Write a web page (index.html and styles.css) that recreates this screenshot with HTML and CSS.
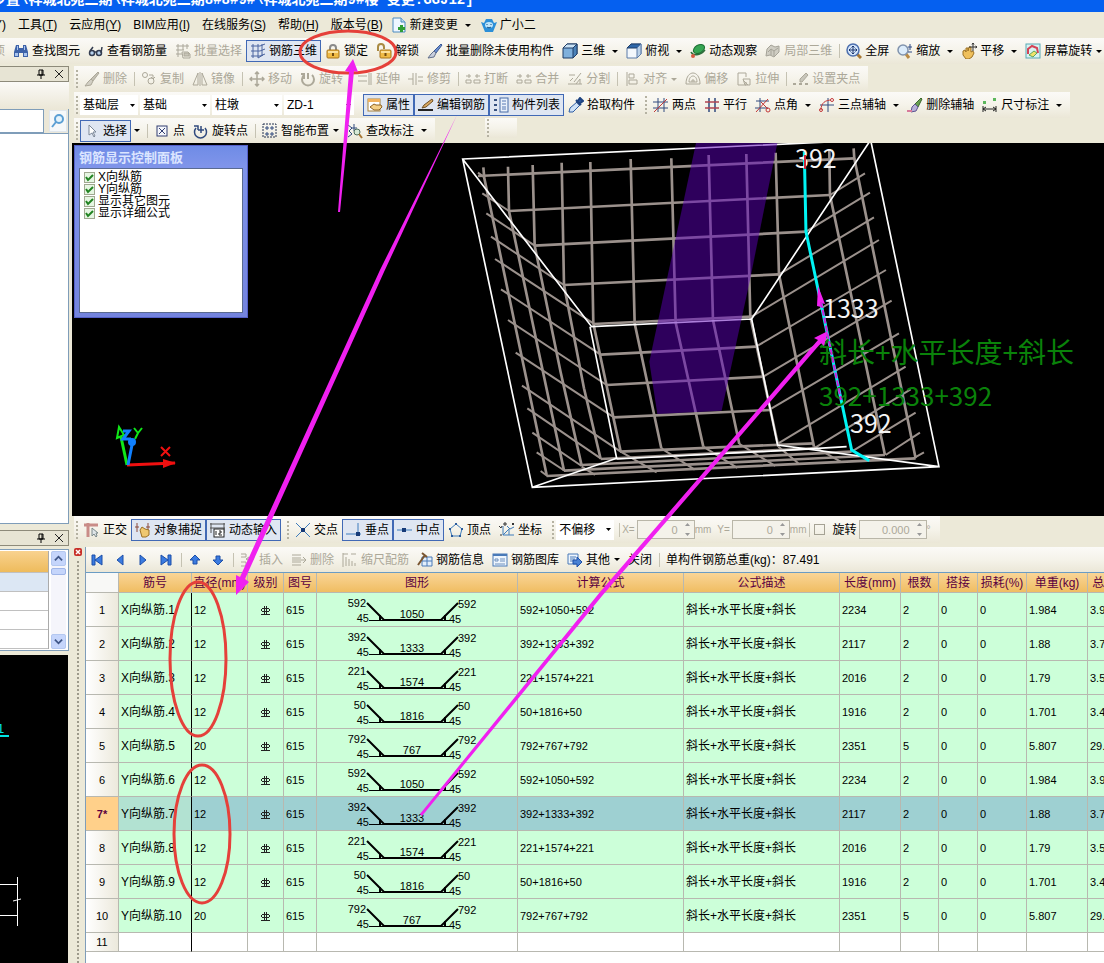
FILE: index.html
```html
<!DOCTYPE html>
<html lang="zh-CN">
<head>
    <meta charset="UTF-8">
    <meta name="viewport" content="width=device-width, initial-scale=1.0">
    <title>钢筋三维</title>
    <link rel="stylesheet" href="styles.css">
</head>
<body>
    <!-- icon sprite -->
    <svg class="sprite" aria-hidden="true">
        <symbol id="i-find" viewBox="0 0 16 16"><path d="M3 2h3v3h4V2h3l2 7v5h-5v-4H6v4H1V9z" fill="#3d62a8"/><path d="M2 10h3v3H2zM11 10h3v3h-3zM4 3h1v4H4zM11 3h1v4h-1z" fill="#a9c4ee"/></symbol>
        <symbol id="i-glasses" viewBox="0 0 16 16"><circle cx="4" cy="10" r="2.5" fill="#b9d3ee" stroke="#333c50" stroke-width="1.5"/><circle cx="11" cy="10" r="2.5" fill="#b9d3ee" stroke="#333c50" stroke-width="1.5"/><path d="M6 9h3M2 8l3-4M13 10l1-6" stroke="#333c50" stroke-width="1.5" fill="none"/></symbol>
        <symbol id="i-batch" viewBox="0 0 16 16"><path d="M1 3h13M1 7h8M1 11h6M3 1v13M8 1v6M12 1v5M7 9h6l2 2v4H8z" fill="none" stroke="#aaa79a"/><path d="M9 10h5v3H9z" fill="#c8c5b8"/></symbol>
        <symbol id="i-mesh" viewBox="0 0 16 16"><path d="M1 3h9l5-2M1 8h9l5-2M1 13h9l5-2M3 1v14M8 1v14M12 1v12M8 15l5-3" fill="none" stroke="#4a64a0"/></symbol>
        <symbol id="i-lock" viewBox="0 0 16 16"><path d="M5 8V5a3 3 0 0 1 6 0v3" fill="none" stroke="#8a8a8a" stroke-width="2"/><rect x="2" y="7" width="12" height="8" rx="1" fill="#f0bb45" stroke="#a8741c"/><path d="M3 8h10v2H3z" fill="#fbe09a"/><path d="M8 10v3" stroke="#704a10" stroke-width="2"/></symbol>
        <symbol id="i-unlock" viewBox="0 0 16 16"><path d="M2 8V4a3 3 0 0 1 6 0v2" fill="none" stroke="#a98a42" stroke-width="2"/><rect x="4" y="7" width="11" height="8" rx="1" fill="#f0bb45" stroke="#a8741c"/><path d="M5 8h9v2H5z" fill="#fbe09a"/><path d="M9.500 10v3" stroke="#704a10" stroke-width="2"/></symbol>
        <symbol id="i-brush" viewBox="0 0 16 16"><path d="M14 1L7 8l2 2 6-8z" fill="#6c8fd0" stroke="#3b5a96"/><path d="M7 8l2 2-2 4-6 1 3-4z" fill="#c9cfdd" stroke="#62708c"/></symbol>
        <symbol id="i-erase" viewBox="0 0 16 16"><path d="M14 1L7 8l2 2 6-8z" fill="#c3c0b4" stroke="#aca899"/><path d="M7 8l2 2-2 4-6 1 3-4z" fill="#d2cfc4" stroke="#aca899"/></symbol>
        <symbol id="i-axisbrush" viewBox="0 0 16 16"><path d="M14 1L8 7l3 3 4-8z" fill="#69a052" stroke="#3c672d"/><path d="M8 7l3 3-2 4-5 1 1-5z" fill="#b7b0d8" stroke="#5d5490"/><path d="M0 14h5" stroke="#d87a9a" stroke-width="2"/></symbol>
        <symbol id="i-cube" viewBox="0 0 16 16"><path d="M1 5l4-4h10v10l-4 4H1z" fill="#7fb0dc" stroke="#1e3c66"/><path d="M1 5l4-4h10l-4 4z" fill="#c9e2f5" stroke="#1e3c66"/><path d="M11 5l4-4v10l-4 4z" fill="#4b82b8" stroke="#1e3c66"/></symbol>
        <symbol id="i-topcube" viewBox="0 0 16 16"><path d="M1 5l4-4h10v10l-4 4H1z" fill="#f2f7fc" stroke="#5a7ba8"/><path d="M1 5l4-4h10l-4 4z" fill="#2d66a8" stroke="#1e3c66"/><path d="M11 5l4-4v10l-4 4z" fill="#b9d0e8" stroke="#5a7ba8"/></symbol>
        <symbol id="i-orbit" viewBox="0 0 16 16"><ellipse cx="9" cy="6" rx="6" ry="4" transform="rotate(-30 9 6)" fill="#36a552" stroke="#1d6f34"/><path d="M1 9c2 4 9 4 14-2" fill="none" stroke="#2c6d3a" stroke-width="1.500"/><circle cx="3" cy="13" r="2" fill="#d65a43"/></symbol>
        <symbol id="i-part" viewBox="0 0 16 16"><path d="M2 6l4-4 4 2 4-1v6l-5 5-4-2-4 1z" fill="#cfcdc3" stroke="#a5a398"/><path d="M3 9l3-3 3 2 4-3M6 6v6M9 8v5" fill="none" stroke="#a5a398"/></symbol>
        <symbol id="i-full" viewBox="0 0 16 16"><path d="M11 11l4 4" stroke="#a87834" stroke-width="3"/><circle cx="7" cy="7" r="6" fill="#d5e6fa" stroke="#4d6fae" stroke-width="1.500"/><path d="M7 3v8M3 7h8M5.500 4.500L7 3l1.500 1.500M5.500 9.500L7 11l1.500-1.500M4.500 5.500L3 7l1.500 1.500M9.500 5.500L11 7 9.500 8.500" stroke="#1b356e" fill="none"/></symbol>
        <symbol id="i-zoom" viewBox="0 0 16 16"><path d="M9 11l3 4" stroke="#b98a45" stroke-width="3"/><circle cx="6" cy="7" r="5" fill="#dcecfb" stroke="#8193ad" stroke-width="1.500"/><path d="M13 1v6M11 4h4M11 9h4" stroke="#2e4b86"/></symbol>
        <symbol id="i-pan" viewBox="0 0 16 16"><path d="M2 8l2-1 1 2V5h2v3l1-4h2v5l2-1 1 2-2 4-3 2H5l-3-4z" fill="#efc05c" stroke="#9b7024"/><path d="M12 0v8M8 4h8M11 1.500L12 0l1 1.500M14.500 3L16 4l-1.500 1" stroke="#333" fill="none"/></symbol>
        <symbol id="i-rotscreen" viewBox="0 0 16 16"><rect x="1" y="1" width="14" height="14" fill="#d9f3f3" stroke="#59aab5"/><path d="M3 11V6l4-3 5 2 1 5" fill="none" stroke="#d44356" stroke-width="2"/><path d="M4 12l5-4 3 2-4 4z" fill="#f1e26b" stroke="#5fa55c"/></symbol>
        <symbol id="i-newdoc" viewBox="0 0 16 16"><path d="M2 1h8l4 4v10H2z" fill="#eef6ff" stroke="#4a8ac0"/><path d="M10 1v4h4" fill="#b8d8f0" stroke="#4a8ac0"/><path d="M10.500 8v7M7 11.500h7" stroke="#2f9e36" stroke-width="3"/></symbol>
        <symbol id="i-xiaoer" viewBox="0 0 16 16"><path d="M0 5l3 1 2-4h6l2 4 3-1-2 5-2 5H4L2 10z" fill="#2b8fd8"/><ellipse cx="8" cy="8" rx="4" ry="3" fill="#bfe6fb"/><path d="M6 7v1M10 7v1M6 10c1 1 3 1 4 0" stroke="#124c80" fill="none"/></symbol>
        <symbol id="i-copy" viewBox="0 0 16 16"><circle cx="4" cy="4" r="2.500"/><circle cx="10" cy="10" r="3"/><path d="M8 4h4v3M10 6l2 2 2-2"/></symbol>
        <symbol id="i-mirror" viewBox="0 0 16 16"><path d="M6 2v12H1zM10 2v12h5zM8 1v14"/></symbol>
        <symbol id="i-move" viewBox="0 0 16 16"><path d="M8 1v14M1 8h14M6 3l2-2 2 2M6 13l2 2 2-2M3 6L1 8l2 2M13 6l2 2-2 2" stroke-width="1.500"/></symbol>
        <symbol id="i-rotate" viewBox="0 0 16 16"><path d="M4 4a6 6 0 1 0 8 0M8 2v6M4 8V3H1" stroke-width="2"/></symbol>
        <symbol id="i-extend" viewBox="0 0 16 16"><path d="M1 5h9M1 10h9M12 2v12M14 2v12"/></symbol>
        <symbol id="i-trim" viewBox="0 0 16 16"><path d="M0 8h5M5 2v12M8 2v12M10 6h5M10 10h5"/></symbol>
        <symbol id="i-break" viewBox="0 0 16 16"><path d="M1 5h5M10 5h5M4 3v4M12 3v4M1 12h5v-3H1zM9 12h6v-3H9z"/></symbol>
        <symbol id="i-split" viewBox="0 0 16 16"><path d="M1 13h14M2 4h6M3 10l3-3M7 11l7-9M9 13l4-5v5"/></symbol>
        <symbol id="i-align" viewBox="0 0 16 16"><path d="M3 1v14M5 3h5v4H5zM5 9h8v4H5z"/></symbol>
        <symbol id="i-offset" viewBox="0 0 16 16"><path d="M1 13c0-8 4-11 7-11s7 3 7 11zM4 11c0-4 2-6 4-6s4 2 4 6zM7 11V9h2v2"/></symbol>
        <symbol id="i-stretch" viewBox="0 0 16 16"><path d="M2 2h8v4M2 2v12h8v-3M7 8h7v6h-5zM8 10l4 4"/></symbol>
        <symbol id="i-grippt" viewBox="0 0 16 16"><path d="M0 13h3M6 13h3M12 13h3" stroke-width="2"/><path d="M13 2L7 8v3h2l6-7z" fill="#c8c6bb"/></symbol>
        <symbol id="i-prop" viewBox="0 0 16 16"><rect x="1" y="2" width="12" height="12" fill="#fff" stroke="#a8813a"/><path d="M1 2h12v3H1z" fill="#f2b25c"/><path d="M3 10l4-3 2 1h5l1 2-3 3H7z" fill="#f4cf86" stroke="#8d6224"/></symbol>
        <symbol id="i-edit" viewBox="0 0 16 16"><path d="M0 13h15" stroke="#222" stroke-width="2"/><path d="M14 2l-8 6-2 3 4-1 7-6z" fill="#d9a860" stroke="#6e4f25"/></symbol>
        <symbol id="i-list" viewBox="0 0 16 16"><path d="M1 3h3M1 8h3M1 13h3" stroke="#36507f" stroke-width="2"/><rect x="7" y="1" width="8" height="14" fill="#e9f1fb" stroke="#476aa6"/><path d="M9 4h4M9 7h4M9 10h4M9 12h4" stroke="#5679b4"/></symbol>
        <symbol id="i-pick" viewBox="0 0 16 16"><path d="M9 5l3 3-7 7-4 0 1-4z" fill="#cfe2f7" stroke="#2f5da3"/><path d="M8 3l5 5M9 5l3-4 3 3-4 3z" fill="#2c5aa3" stroke="#1f4481" stroke-width="2"/></symbol>
        <symbol id="i-twopt" viewBox="0 0 16 16"><path d="M5 1v14M11 1v14M0 5h15M0 11h15" stroke="#304a7e"/><path d="M1 15L14 2" stroke="#c23838"/></symbol>
        <symbol id="i-parallel" viewBox="0 0 16 16"><path d="M5 1v14M11 1v14" stroke="#304a7e" stroke-width="1.500"/><path d="M1 5h14M1 11h14" stroke="#b14451" stroke-width="1.500"/></symbol>
        <symbol id="i-angle" viewBox="0 0 16 16"><path d="M5 1v14M1 4h13M0 11h13" stroke="#304a7e"/><path d="M1 15L13 2M6 5l7 7" stroke="#c23838"/><circle cx="13" cy="13" r="2" fill="none" stroke="#c23838"/></symbol>
        <symbol id="i-threept" viewBox="0 0 16 16"><path d="M9 1v14M1 8h14" stroke="#304a7e"/><path d="M2 13c0-7 4-10 11-10" fill="none" stroke="#c23838"/><circle cx="2" cy="13" r="1.500" fill="none" stroke="#c23838"/><circle cx="13" cy="3" r="1.500" fill="#fff" stroke="#c23838"/></symbol>
        <symbol id="i-dim" viewBox="0 0 16 16"><path d="M1 9v6M14 9v6M1 12h13M4 10l-3 2 3 2M11 10l3 2-3 2" stroke="#222" fill="none"/><path d="M1 4h3v3H1zM11 1h3v3h-3z" fill="#5cb75c"/></symbol>
        <symbol id="i-cursor" viewBox="0 0 16 16"><path d="M5 2v10l3-2 2 4 1-1-2-4h3z" fill="#fff" stroke="#7b8798"/></symbol>
        <symbol id="i-point" viewBox="0 0 16 16"><rect x="3" y="3" width="10" height="10" fill="#f4f6fb" stroke="#323f72"/><path d="M5 5l6 6M11 5l-6 6" stroke="#323f72"/></symbol>
        <symbol id="i-rotpt" viewBox="0 0 16 16"><path d="M3 5a6 6 0 1 0 9 0M1 3h4v4M8 3v7M5 7h6" fill="none" stroke="#304a7e" stroke-width="1.500"/></symbol>
        <symbol id="i-smart" viewBox="0 0 16 16"><rect x="1" y="1" width="13" height="13" fill="none" stroke="#23304f" stroke-dasharray="2 1"/><path d="M5 3v4M3 5h4M10 3v4M8 5h4M5 9v4M3 11h4M10 9v4M8 11h4" stroke="#304a7e"/></symbol>
        <symbol id="i-check" viewBox="0 0 16 16"><path d="M1 2l4 3-3 3 3 3-4 3M7 1v7M4 5h6" stroke="#304a7e" fill="none"/><circle cx="10" cy="9" r="3" fill="#d7e9d6" stroke="#4d6d5b"/><path d="M12 11l3 4" stroke="#a87834" stroke-width="2"/></symbol>
        <symbol id="i-ortho" viewBox="0 0 16 16"><path d="M0 3h14M4 1v14" stroke="#c98c88" stroke-width="3"/><path d="M8 6v8l2-2 2 3 1-1-1-3h2z" fill="#dfe5e8" stroke="#7c8a8c"/></symbol>
        <symbol id="i-snap" viewBox="0 0 16 16"><path d="M2 1v9M13 1v9M0 5h4M11 5h4" stroke="#8a4b3c"/><path d="M5 8l2-3 3 2 4 1v5l-3 2H7z" fill="#efc870" stroke="#9b7024"/></symbol>
        <symbol id="i-dyn" viewBox="0 0 16 16"><path d="M0 2h15M0 6h15M1 1v10M14 1v10" stroke="#555" fill="none"/><rect x="4" y="7" width="10" height="8" fill="#fff" stroke="#222"/><path d="M6 9v4M9 9h2v2H9v2h3" stroke="#222" fill="none"/></symbol>
        <symbol id="i-cross" viewBox="0 0 16 16"><path d="M1 1l14 14M15 1L1 15" stroke="#3e7cbc"/><rect x="6" y="6" width="4" height="4" fill="#173b78"/></symbol>
        <symbol id="i-perp" viewBox="0 0 16 16"><path d="M12 1v12M0 12h15" stroke="#3e7cbc"/><rect x="10" y="10" width="4" height="4" fill="#173b78"/></symbol>
        <symbol id="i-mid" viewBox="0 0 16 16"><path d="M0 8h15" stroke="#3e7cbc"/><rect x="5" y="6" width="4" height="4" fill="#173b78"/></symbol>
        <symbol id="i-vertex" viewBox="0 0 16 16"><path d="M8 2l6 5-2 7H4L2 7z" fill="none" stroke="#3e7cbc"/><path d="M7 1h2v2H7zM13 6h2v2h-2zM1 6h2v2H1zM3 13h2v2H3zM11 13h2v2h-2z" fill="#2a5a9b"/></symbol>
        <symbol id="i-coord" viewBox="0 0 16 16"><path d="M4 4v9h11M4 13l6-6M10 7v6M8 4l3 3 4-2" stroke="#3e7cbc" fill="none"/><path d="M0 4l2 2 1-2M1 13h2M5 1h2v2H5zM13 1l2 2M15 1l-2 2" stroke="#333" fill="none"/></symbol>
        <symbol id="i-first" viewBox="0 0 16 16"><path d="M3 3h3v10H3zM13 3v10L6 8z" fill="#3b7be0" stroke="#1d4fa8"/></symbol>
        <symbol id="i-prev" viewBox="0 0 16 16"><path d="M11 3v10L5 8z" fill="#3b7be0" stroke="#1d4fa8"/></symbol>
        <symbol id="i-next" viewBox="0 0 16 16"><path d="M5 3v10l6-5z" fill="#3b7be0" stroke="#1d4fa8"/></symbol>
        <symbol id="i-last" viewBox="0 0 16 16"><path d="M10 3h3v10h-3zM3 3v10l7-5z" fill="#3b7be0" stroke="#1d4fa8"/></symbol>
        <symbol id="i-up" viewBox="0 0 16 16"><path d="M8 3l5 5h-3v4H6V8H3z" fill="#3b7be0" stroke="#1d4fa8"/></symbol>
        <symbol id="i-down" viewBox="0 0 16 16"><path d="M8 13l5-5h-3V4H6v4H3z" fill="#3b7be0" stroke="#1d4fa8"/></symbol>
        <symbol id="i-insert" viewBox="0 0 16 16"><path d="M1 2h5v3H1M1 10h5v4H1M6 7h8M9 5L6 7l3 2"/></symbol>
        <symbol id="i-delrow" viewBox="0 0 16 16"><path d="M1 3h9M1 6h9M1 8h14M1 10h9M1 13h9M12 5l3 3-3 3"/></symbol>
        <symbol id="i-scale" viewBox="0 0 16 16"><path d="M1 1v14M1 2h5M4 5v9M7 7v7M10 9v5M13 11v3M9 2h5"/></symbol>
        <symbol id="i-info" viewBox="0 0 16 16"><path d="M5 5h10v9H5zM5 9h10M10 5v9" fill="#e3effb" stroke="#4a7ab8"/><path d="M1 13L8 3M5 1l5 4" stroke="#7a5631" stroke-width="2"/></symbol>
        <symbol id="i-lib" viewBox="0 0 16 16"><rect x="1" y="2" width="14" height="12" fill="#eef5fd" stroke="#4a7ab8"/><path d="M1 3h14" stroke="#4a7ab8" stroke-width="2"/><path d="M3 7h3v2H3zM8 7h5M8 9h5M3 12h10" stroke="#6f90bd" fill="none"/></symbol>
        <symbol id="i-other" viewBox="0 0 16 16"><path d="M1 2h10v10H1z" fill="#eef5fd" stroke="#4a7ab8"/><path d="M3 5h6M3 7h5M3 9h4" stroke="#4a7ab8"/><path d="M6 8h4V5l5 5-5 5v-3H6z" fill="#4a82d4" stroke="#1d4fa8"/></symbol>
        <symbol id="i-pin" viewBox="0 0 10 10"><path d="M3 1h4v5H3zM6 1v5M1 6h8M5 6v4" fill="none" stroke="#000"/></symbol>
        <symbol id="i-close" viewBox="0 0 10 10"><path d="M1 1l8 8M9 1L1 9" stroke="#222"/></symbol>
        <symbol id="grade" viewBox="0 0 11 11"><path d="M4.500 1v8M6.500 1v8M1 9.500h9M2 3.500h7M2 6.500h7M1.500 4v2M9.500 4v2" stroke="#222" fill="none"/></symbol>
        <symbol id="bent" viewBox="0 0 140 32"><path d="M20 9l17 17h57l17-17" fill="none" stroke="#000" stroke-width="2"/><path d="M22 26.500h15M94 26.500h13" fill="none" stroke="#000"/><path d="M33 21v5M98 21v5" fill="none" stroke="#000" stroke-width="2"/></symbol>
    </svg>

    <header class="titlebar">步置\祥城北苑二期\祥城北苑二期8#8#9#\祥城北苑二期9#楼 变更.GGJ12]</header>

    <nav class="menubar">
        <a href="#">(Y)</a>
        <a href="#">工具(<u>T</u>)</a>
        <a href="#">云应用(<u>Y</u>)</a>
        <a href="#">BIM应用(<u>I</u>)</a>
        <a href="#">在线服务(<u>S</u>)</a>
        <a href="#">帮助(<u>H</u>)</a>
        <a href="#">版本号(<u>B</u>)</a>
        <button class="tool"><svg class="icon"><use href="#i-newdoc"/></svg>新建变更<i class="drop"></i></button>
        <button class="tool"><svg class="icon"><use href="#i-xiaoer"/></svg>广小二</button>
    </nav>

    <div class="main-tools strip">
        <button class="tool" disabled>项</button>
        <button class="tool"><svg class="icon"><use href="#i-find"/></svg>查找图元</button>
        <button class="tool"><svg class="icon"><use href="#i-glasses"/></svg>查看钢筋量</button>
        <button class="tool" disabled><svg class="icon"><use href="#i-batch"/></svg>批量选择</button>
        <button class="tool on"><svg class="icon"><use href="#i-mesh"/></svg>钢筋三维</button>
        <button class="tool"><svg class="icon"><use href="#i-lock"/></svg>锁定</button>
        <button class="tool"><svg class="icon"><use href="#i-unlock"/></svg>解锁</button>
        <button class="tool"><svg class="icon"><use href="#i-brush"/></svg>批量删除未使用构件</button>
        <span class="gap"></span>
        <button class="tool"><svg class="icon"><use href="#i-cube"/></svg>三维<i class="drop"></i></button>
        <button class="tool"><svg class="icon"><use href="#i-topcube"/></svg>俯视<i class="drop"></i></button>
        <button class="tool"><svg class="icon"><use href="#i-orbit"/></svg>动态观察</button>
        <button class="tool" disabled><svg class="icon"><use href="#i-part"/></svg>局部三维</button>
        <span class="sep"></span>
        <button class="tool"><svg class="icon"><use href="#i-full"/></svg>全屏</button>
        <button class="tool"><svg class="icon"><use href="#i-zoom"/></svg>缩放<i class="drop"></i></button>
        <button class="tool"><svg class="icon"><use href="#i-pan"/></svg>平移<i class="drop"></i></button>
        <button class="tool"><svg class="icon"><use href="#i-rotscreen"/></svg>屏幕旋转<i class="drop near"></i></button>
    </div>

    <div class="workspace">
        <aside class="sidebar">
            <div class="dock-head"><svg class="mini"><use href="#i-pin"/></svg><svg class="mini"><use href="#i-close"/></svg></div>
            <div class="dock-strip"></div>
            <div class="search">
                <input type="text" aria-label="搜索">
                <button aria-label="查找"><svg class="icon" viewBox="0 0 16 16"><circle cx="9" cy="6" r="4" fill="#e4f3fc" stroke="#5b9fd4" stroke-width="2"/><path d="M6 9l-4 5" stroke="#5b9fd4" stroke-width="2"/></svg></button>
            </div>
            <div class="tree"></div>
            <div class="dock-head second"><svg class="mini"><use href="#i-pin"/></svg><svg class="mini"><use href="#i-close"/></svg></div>
            <div class="props">
                <div class="prop-rows"><div class="head"></div><div class="sel"></div><div></div><div></div><div></div></div>
                <div class="scroll">
                    <button aria-label="向上"><svg viewBox="0 0 10 10"><path d="M1 7l4-4 4 4" fill="none" stroke="#3f5687" stroke-width="2"/></svg></button>
                    <span class="thumb"></span>
                    <button class="bottom" aria-label="向下"><svg viewBox="0 0 10 10"><path d="M1 3l4 4 4-4" fill="none" stroke="#3f5687" stroke-width="2"/></svg></button>
                </div>
            </div>
            <div class="preview">
                <svg width="68" height="308">
                    <text x="-3" y="78" fill="#00e5e5" font-size="13">1</text>
                    <path d="M0 81h9" stroke="#00e5e5" stroke-width="2"/>
                    <path d="M0 229.500h17M0 260.500h17M17.500 222v49M13 246l8-2" stroke="#fff" fill="none"/>
                </svg>
            </div>
        </aside>

        <main class="main">
            <div class="rows">
                <div class="strip edit-tools">
                    <span class="grip"></span>
                    <button class="tool" disabled><svg class="icon"><use href="#i-erase"/></svg>删除</button>
                    <span class="sep"></span>
                    <button class="tool" disabled><svg class="icon"><use href="#i-copy"/></svg>复制</button>
                    <button class="tool" disabled><svg class="icon"><use href="#i-mirror"/></svg>镜像</button>
                    <span class="sep"></span>
                    <button class="tool" disabled><svg class="icon"><use href="#i-move"/></svg>移动</button>
                    <button class="tool" disabled><svg class="icon"><use href="#i-rotate"/></svg>旋转</button>
                    <span class="sep"></span>
                    <button class="tool" disabled><svg class="icon"><use href="#i-extend"/></svg>延伸</button>
                    <button class="tool" disabled><svg class="icon"><use href="#i-trim"/></svg>修剪</button>
                    <span class="sep"></span>
                    <button class="tool" disabled><svg class="icon"><use href="#i-break"/></svg>打断</button>
                    <button class="tool" disabled><svg class="icon"><use href="#i-break"/></svg>合并</button>
                    <button class="tool" disabled><svg class="icon"><use href="#i-split"/></svg>分割</button>
                    <span class="sep"></span>
                    <button class="tool" disabled><svg class="icon"><use href="#i-align"/></svg>对齐<i class="drop near"></i></button>
                    <button class="tool" disabled><svg class="icon"><use href="#i-offset"/></svg>偏移</button>
                    <button class="tool" disabled><svg class="icon"><use href="#i-stretch"/></svg>拉伸</button>
                    <span class="sep"></span>
                    <button class="tool" disabled><svg class="icon"><use href="#i-grippt"/></svg>设置夹点</button>
                </div>
                <div class="strip">
                    <span class="grip"></span>
                    <select class="pick short" aria-label="楼层"><option>基础层</option></select>
                    <select class="pick" aria-label="类型"><option>基础</option></select>
                    <select class="pick" aria-label="构件类型"><option>柱墩</option></select>
                    <select class="pick" aria-label="构件"><option>ZD-1</option></select>
                    <span class="gap wide"></span>
                    <button class="tool on"><svg class="icon"><use href="#i-prop"/></svg>属性</button>
                    <button class="tool on"><svg class="icon"><use href="#i-edit"/></svg>编辑钢筋</button>
                    <button class="tool on"><svg class="icon"><use href="#i-list"/></svg>构件列表</button>
                    <button class="tool"><svg class="icon"><use href="#i-pick"/></svg>拾取构件</button>
                    <span class="gap"></span>
                    <span class="grip"></span>
                    <button class="tool"><svg class="icon"><use href="#i-twopt"/></svg>两点</button>
                    <button class="tool"><svg class="icon"><use href="#i-parallel"/></svg>平行</button>
                    <button class="tool"><svg class="icon"><use href="#i-angle"/></svg>点角<i class="drop"></i></button>
                    <button class="tool"><svg class="icon"><use href="#i-threept"/></svg>三点辅轴<i class="drop"></i></button>
                    <button class="tool"><svg class="icon"><use href="#i-axisbrush"/></svg>删除辅轴</button>
                    <button class="tool"><svg class="icon"><use href="#i-dim"/></svg>尺寸标注<i class="drop"></i></button>
                </div>
                <div class="pair">
                    <div class="strip">
                        <span class="grip"></span>
                        <button class="tool on"><svg class="icon"><use href="#i-cursor"/></svg>选择</button>
                        <button class="tool" aria-label="选择方式"><i class="drop flat"></i></button>
                        <span class="sep"></span>
                        <button class="tool"><svg class="icon"><use href="#i-point"/></svg>点</button>
                        <button class="tool"><svg class="icon"><use href="#i-rotpt"/></svg>旋转点</button>
                        <span class="sep"></span>
                        <button class="tool"><svg class="icon"><use href="#i-smart"/></svg>智能布置<i class="drop near"></i></button>
                        <button class="tool"><svg class="icon"><use href="#i-check"/></svg>查改标注<i class="drop"></i></button>
                    </div>
                    <div class="strip empty"><span class="grip"></span></div>
                </div>
            </div>

            <section class="viewport">
                <svg class="scene">
                    <g transform="translate(378 -3) scale(.3333)" fill="none">
                        <g stroke="#9b918c" stroke-width="8">
                            <!-- back wall bars running into side walls and floor -->
                            <path d="M100 82l3 33 89 425 98 465M174 80l3 133 88 417 77 362M248 75l6 242 78 380 63 280M335 68l7 367 60 310 50 212M421 66l9 484 82 385M542 57l12 493 80 375M664 55l13 493 83 372M776 45l13 495 79 372M889 42l12 488 84 390M977 38l10 365 105 517M1138 30l2 135 165 780M1211 25l2 30 184 900"/>
                            <path d="M84 108L1213 55M177 213l963-48M254 317l814-42M342 435l645-32M430 552l475-22"/>
                            <path d="M452 644l466-24M470 735l470-25M492 832l468-22M510 935l582-25"/>
                            <path d="M452 957l640-32M395 975l810-40M342 992l963-47M290 1008l1107-53"/>
                        </g>
                        <g stroke="#9b918c" stroke-width="6">
                            <path d="M84 98l20 15M97 160l80 53M109 220l145 97M123 290l219 145M135 357l295 193M153 448l299 196M174 540l296 195M197 638l295 194M216 737l296 198M232 805l220 150M247 878l148 100M260 937l85 56M272 993l20 15"/>
                            <path d="M1140 165l105-65M1068 275l192-117M987 403l285-171M905 530l382-230M922 618l386-228M940 710l385-228M960 808l387-228M985 910l382-230M1092 925l290-177M1205 935l192-117M1307 945l103-67M1390 955l32-18"/>
                            <path d="M512 935l108 62M634 925l100 64M760 920l102 64M868 912l108 66M985 920l60 50M1092 920l80 45M395 980l40 25"/>
                        </g>
                        <g stroke="#fff" stroke-width="5">
                            <path d="M38 57L1262 0l205 980-1220 62zM38 57l387 503 480-23L1262 0M420 560l80 395-253 87M905 537l78 378 484 65M500 957l490-25 200-12"/>
                        </g>
                        <path d="M740 0h244l-84 420-85 392-193 10-24-157z" fill="#5c00b8" fill-opacity=".5"/>
                        <path d="M1063 35l5 240 137 655 53 32" stroke="#00f4f4" stroke-width="9"/>
                    </g>
                    <g class="dims">
                        <text x="723" y="25">392</text>
                        <text x="751" y="175">1333</text>
                        <text x="778" y="290">392</text>
                        <text class="formula big" x="747" y="220">斜长+水平长度+斜长</text>
                        <text class="formula" x="747" y="263">392+1333+392</text>
                    </g>
                    <path d="M733 12v14" stroke="#d02838" stroke-width="2"/>
                    <!-- axis tripod -->
                    <g fill="none">
                        <path d="M55 322l48-2" stroke="#f01010" stroke-width="3"/><path d="M91 316l13 4-13 5z" fill="#f01010"/>
                        <path d="M55 322l-6-28" stroke="#10e818" stroke-width="3"/><path d="M45 295l2-11 5 8zM62 285l4 5 4-5M66 290l-3 6" stroke="#10e818" stroke-width="2"/>
                        <path d="M56 322l5-25M51 288h6l-6 8h8" stroke="#1080ff" stroke-width="3"/><circle cx="60" cy="299" r="4" fill="#1080ff"/>
                        <path d="M89 304l9 9M98 304l-9 9" stroke="#f01010" stroke-width="2"/>
                    </g>
                </svg>
                <div class="float">
                    <h2>钢筋显示控制面板</h2>
                    <div class="float-body">
                        <label><input type="checkbox" checked>X向纵筋</label>
                        <label><input type="checkbox" checked>Y向纵筋</label>
                        <label><input type="checkbox" checked>显示其它图元</label>
                        <label><input type="checkbox" checked>显示详细公式</label>
                    </div>
                </div>
            </section>

            <div class="snapbar">
                <div class="strip">
                    <span class="grip"></span>
                    <button class="tool"><svg class="icon"><use href="#i-ortho"/></svg>正交</button>
                    <button class="tool on"><svg class="icon"><use href="#i-snap"/></svg>对象捕捉</button>
                    <button class="tool on"><svg class="icon"><use href="#i-dyn"/></svg>动态输入</button>
                    <span class="gap"></span>
                    <span class="grip"></span>
                    <button class="tool"><svg class="icon"><use href="#i-cross"/></svg>交点</button>
                    <button class="tool on"><svg class="icon"><use href="#i-perp"/></svg>垂点</button>
                    <button class="tool on"><svg class="icon"><use href="#i-mid"/></svg>中点</button>
                    <button class="tool"><svg class="icon"><use href="#i-vertex"/></svg>顶点</button>
                    <button class="tool"><svg class="icon"><use href="#i-coord"/></svg>坐标</button>
                    <span class="gap"></span>
                    <span class="grip"></span>
                    <select class="pick short" aria-label="偏移方式"><option>不偏移</option></select>
                    <span class="sep"></span>
                    <label class="spin">X=<input type="text" value="0" disabled>mm</label>
                    <label class="spin">Y=<input type="text" value="0" disabled>mm</label>
                    <span class="sep"></span>
                    <label class="turn"><input type="checkbox">旋转</label>
                    <label class="spin wide"><input type="text" value="0.000" aria-label="角度" disabled>°</label>
                </div>
            </div>

            <section class="editor">
                <div class="dock-side"><button aria-label="关闭面板"><svg viewBox="0 0 8 8"><path d="M2 2l4 4M6 2L2 6" stroke="#fff" stroke-width="1.500"/></svg></button></div>
                <div class="editor-body">
                    <div class="strip editor-tools">
                        <button class="nav" aria-label="第一条"><svg class="icon"><use href="#i-first"/></svg></button>
                        <button class="nav" aria-label="上一条"><svg class="icon"><use href="#i-prev"/></svg></button>
                        <button class="nav" aria-label="下一条"><svg class="icon"><use href="#i-next"/></svg></button>
                        <button class="nav" aria-label="最后一条"><svg class="icon"><use href="#i-last"/></svg></button>
                        <span class="sep"></span>
                        <button class="nav" aria-label="上移"><svg class="icon"><use href="#i-up"/></svg></button>
                        <button class="nav" aria-label="下移"><svg class="icon"><use href="#i-down"/></svg></button>
                        <span class="sep"></span>
                        <button class="tool" disabled><svg class="icon"><use href="#i-insert"/></svg>插入</button>
                        <button class="tool" disabled><svg class="icon"><use href="#i-delrow"/></svg>删除</button>
                        <button class="tool" disabled><svg class="icon"><use href="#i-scale"/></svg>缩尺配筋</button>
                        <button class="tool"><svg class="icon"><use href="#i-info"/></svg>钢筋信息</button>
                        <button class="tool"><svg class="icon"><use href="#i-lib"/></svg>钢筋图库</button>
                        <button class="tool"><svg class="icon"><use href="#i-other"/></svg>其他<i class="drop near"></i></button>
                        <button class="tool">关闭</button>
                        <span class="sep"></span>
                        <span class="total">单构件钢筋总重(kg)：87.491</span>
                    </div>
                    <table class="bars">
                        <colgroup><col class="c-no"><col class="c-name"><col class="c-dia"><col class="c-grade"><col class="c-fig"><col><col class="c-calc"><col class="c-desc"><col class="c-len"><col class="c-qty"><col class="c-lap"><col class="c-loss"><col class="c-len"><col class="c-total"></colgroup>
                        <thead>
                            <tr><th></th><th>筋号</th><th>直径(mm)</th><th>级别</th><th>图号</th><th>图形</th><th>计算公式</th><th>公式描述</th><th>长度(mm)</th><th>根数</th><th>搭接</th><th>损耗(%)</th><th>单重(kg)</th><th>总重(kg)</th></tr>
                        </thead>
                        <tbody>
                            <tr><th>1</th><td class="name">X向纵筋.1</td><td>12</td><td class="mid"><svg class="grade"><use href="#grade"/></svg></td><td>615</td><td class="mid"><svg class="bent"><use href="#bent"/><text class="end" x="19" y="13">592</text><text x="111" y="14">592</text><text class="end" x="22" y="28">45</text><text x="102" y="29">45</text><text class="center" x="65" y="24">1050</text></svg></td><td>592+1050+592</td><td class="desc">斜长+水平长度+斜长</td><td>2234</td><td>2</td><td>0</td><td>0</td><td>1.984</td><td>3.968</td></tr>
                            <tr><th>2</th><td class="name">X向纵筋.2</td><td>12</td><td class="mid"><svg class="grade"><use href="#grade"/></svg></td><td>615</td><td class="mid"><svg class="bent"><use href="#bent"/><text class="end" x="19" y="13">392</text><text x="111" y="14">392</text><text class="end" x="22" y="28">45</text><text x="102" y="29">45</text><text class="center" x="65" y="24">1333</text></svg></td><td>392+1333+392</td><td class="desc">斜长+水平长度+斜长</td><td>2117</td><td>2</td><td>0</td><td>0</td><td>1.88</td><td>3.76</td></tr>
                            <tr><th>3</th><td class="name">X向纵筋.3</td><td>12</td><td class="mid"><svg class="grade"><use href="#grade"/></svg></td><td>615</td><td class="mid"><svg class="bent"><use href="#bent"/><text class="end" x="19" y="13">221</text><text x="111" y="14">221</text><text class="end" x="22" y="28">45</text><text x="102" y="29">45</text><text class="center" x="65" y="24">1574</text></svg></td><td>221+1574+221</td><td class="desc">斜长+水平长度+斜长</td><td>2016</td><td>2</td><td>0</td><td>0</td><td>1.79</td><td>3.58</td></tr>
                            <tr><th>4</th><td class="name">X向纵筋.4</td><td>12</td><td class="mid"><svg class="grade"><use href="#grade"/></svg></td><td>615</td><td class="mid"><svg class="bent"><use href="#bent"/><text class="end" x="19" y="13">50</text><text x="111" y="14">50</text><text class="end" x="22" y="28">45</text><text x="102" y="29">45</text><text class="center" x="65" y="24">1816</text></svg></td><td>50+1816+50</td><td class="desc">斜长+水平长度+斜长</td><td>1916</td><td>2</td><td>0</td><td>0</td><td>1.701</td><td>3.402</td></tr>
                            <tr><th>5</th><td class="name">X向纵筋.5</td><td>20</td><td class="mid"><svg class="grade"><use href="#grade"/></svg></td><td>615</td><td class="mid"><svg class="bent"><use href="#bent"/><text class="end" x="19" y="13">792</text><text x="111" y="14">792</text><text class="end" x="22" y="28">45</text><text x="102" y="29">45</text><text class="center" x="65" y="24">767</text></svg></td><td>792+767+792</td><td class="desc">斜长+水平长度+斜长</td><td>2351</td><td>5</td><td>0</td><td>0</td><td>5.807</td><td>29.035</td></tr>
                            <tr><th>6</th><td class="name">Y向纵筋.6</td><td>12</td><td class="mid"><svg class="grade"><use href="#grade"/></svg></td><td>615</td><td class="mid"><svg class="bent"><use href="#bent"/><text class="end" x="19" y="13">592</text><text x="111" y="14">592</text><text class="end" x="22" y="28">45</text><text x="102" y="29">45</text><text class="center" x="65" y="24">1050</text></svg></td><td>592+1050+592</td><td class="desc">斜长+水平长度+斜长</td><td>2234</td><td>2</td><td>0</td><td>0</td><td>1.984</td><td>3.968</td></tr>
                            <tr class="current"><th>7*</th><td class="name">Y向纵筋.7</td><td>12</td><td class="mid"><svg class="grade"><use href="#grade"/></svg></td><td>615</td><td class="mid"><svg class="bent"><use href="#bent"/><text class="end" x="19" y="13">392</text><text x="111" y="14">392</text><text class="end" x="22" y="28">45</text><text x="102" y="29">45</text><text class="center" x="65" y="24">1333</text></svg></td><td>392+1333+392</td><td class="desc">斜长+水平长度+斜长</td><td>2117</td><td>2</td><td>0</td><td>0</td><td>1.88</td><td>3.76</td></tr>
                            <tr><th>8</th><td class="name">Y向纵筋.8</td><td>12</td><td class="mid"><svg class="grade"><use href="#grade"/></svg></td><td>615</td><td class="mid"><svg class="bent"><use href="#bent"/><text class="end" x="19" y="13">221</text><text x="111" y="14">221</text><text class="end" x="22" y="28">45</text><text x="102" y="29">45</text><text class="center" x="65" y="24">1574</text></svg></td><td>221+1574+221</td><td class="desc">斜长+水平长度+斜长</td><td>2016</td><td>2</td><td>0</td><td>0</td><td>1.79</td><td>3.58</td></tr>
                            <tr><th>9</th><td class="name">Y向纵筋.9</td><td>12</td><td class="mid"><svg class="grade"><use href="#grade"/></svg></td><td>615</td><td class="mid"><svg class="bent"><use href="#bent"/><text class="end" x="19" y="13">50</text><text x="111" y="14">50</text><text class="end" x="22" y="28">45</text><text x="102" y="29">45</text><text class="center" x="65" y="24">1816</text></svg></td><td>50+1816+50</td><td class="desc">斜长+水平长度+斜长</td><td>1916</td><td>2</td><td>0</td><td>0</td><td>1.701</td><td>3.402</td></tr>
                            <tr><th>10</th><td class="name">Y向纵筋.10</td><td>20</td><td class="mid"><svg class="grade"><use href="#grade"/></svg></td><td>615</td><td class="mid"><svg class="bent"><use href="#bent"/><text class="end" x="19" y="13">792</text><text x="111" y="14">792</text><text class="end" x="22" y="28">45</text><text x="102" y="29">45</text><text class="center" x="65" y="24">767</text></svg></td><td>792+767+792</td><td class="desc">斜长+水平长度+斜长</td><td>2351</td><td>5</td><td>0</td><td>0</td><td>5.807</td><td>29.035</td></tr>
                            <tr class="blank"><th>11</th><td class="name"></td><td></td><td></td><td></td><td></td><td></td><td></td><td></td><td></td><td></td><td></td><td></td><td></td></tr>
                        </tbody>
                    </table>
                </div>
            </section>
        </main>
    </div>

    <!-- hand-drawn marks over the window -->
    <svg class="marks" aria-hidden="true">
        <g fill="none" stroke="#e5403a" stroke-width="3">
            <ellipse cx="348" cy="52" rx="48" ry="21"/>
            <ellipse cx="198" cy="659" rx="28" ry="77"/>
            <ellipse cx="202" cy="834" rx="28" ry="69"/>
        </g>
        <g fill="#f020f0">
            <path d="M338 212l11-140-4-1 8-12 5 13-4-1-14 141z"/>
            <path d="M457 115L380 270 240 577l-4-2v20l13-13-4-3L384 272z"/>
            <path d="M420 814L600 592 818 340l-4-2 14-7-4 15-3-3L602 596 422 816z"/>
            <path d="M818 286l7 18-4-1v4l-4-1z"/>
        </g>
        <path d="M821 302l20 98" stroke="#d020e0" stroke-width="2" stroke-dasharray="6 2" fill="none"/>
    </svg>
</body>
</html>
```

FILE: styles.css
```css
* {
    box-sizing: border-box;
}
body {
    margin: 0;
    height: 100vh;
    display: flex;
    flex-direction: column;
    overflow: hidden;
    position: relative;
    background: #ece9d8;
    color: #000;
    font-family: "Liberation Sans", "Noto Sans CJK SC", sans-serif;
    font-size: 12px;
    line-height: 16px;
}
button, input, select {
    font: inherit;
    color: inherit;
    margin: 0;
}
.sprite {
    position: absolute;
    width: 0;
    height: 0;
}
.icon {
    width: 16px;
    height: 16px;
    flex: none;
}

/* title and menu */
.titlebar {
    flex: none;
    height: 12px;
    display: flex;
    align-items: flex-end;
    margin-left: -8px;
    padding-bottom: 4px;
    overflow: hidden;
    white-space: nowrap;
    background: #0560f0;
    color: #fff;
    font-family: "Liberation Mono", "Noto Sans CJK SC", monospace;
    font-size: 14px;
    font-weight: bold;
}
.menubar {
    flex: none;
    height: 26px;
    display: flex;
    align-items: center;
    gap: 12px;
    margin-left: -10px;
    white-space: nowrap;
}
.menubar a {
    color: #000;
    text-decoration: none;
}
.menubar .tool {
    margin: 0 -2px 0 -8px;
}

/* toolbars */
.strip {
    display: flex;
    align-items: center;
    width: fit-content;
    height: 26px;
    padding-right: 4px;
    white-space: nowrap;
    background: linear-gradient(#fbfaf7, #f5f3ea 50%, #ebe7d7);
}
.main-tools {
    flex: none;
    width: auto;
    margin-left: -11px;
}
.tool {
    display: flex;
    align-items: center;
    gap: 3px;
    flex: none;
    height: 22px;
    padding: 0 3px;
    border: 1px solid transparent;
    background: none;
}
.tool.on {
    border-color: #4169b5;
    background: #dfe6f2;
}
.tool:disabled {
    color: #aca899;
}
.tool:disabled .icon {
    fill: none;
    stroke: #aca899;
}
.drop {
    border: 3px solid transparent;
    border-top-color: currentColor;
    border-bottom: 0;
    margin-left: 4px;
    width: 5px;
}
.drop.near {
    margin-left: 1px;
}
.drop.flat {
    margin-left: -1px;
}
.sep {
    flex: none;
    width: 1px;
    height: 14px;
    margin: 0 2px 0 3px;
    background: #c5c2b2;
}
.gap {
    width: 4px;
}
.gap.wide {
    width: 7px;
}
.grip {
    flex: none;
    width: 2px;
    height: 18px;
    margin: 0 2px 0 2px;
    background: repeating-linear-gradient(#b5b2a2 0 2px, transparent 2px 4px);
}
.pick {
    width: 70px;
    height: 20px;
    margin-right: 2px;
    padding: 0 0 0 3px;
    border: 0;
    border-radius: 0;
    appearance: none;
    background: #fff url("data:image/svg+xml,%3Csvg xmlns='http://www.w3.org/2000/svg' width='5' height='3'%3E%3Cpath d='M0 0h5L2.500 3z'/%3E%3C/svg%3E") no-repeat right 3px center;
}
.pick.short {
    width: 58px;
}

/* docked left side */
.workspace {
    flex: 1;
    display: flex;
    min-height: 0;
}
.sidebar {
    flex: none;
    width: 69px;
    display: flex;
    flex-direction: column;
    padding-top: 2px;
}
.dock-head {
    flex: none;
    height: 16px;
    display: flex;
    justify-content: flex-end;
    align-items: center;
    gap: 8px;
    padding-right: 4px;
    border: 1px solid #8d8a7a;
    border-left: 0;
    background: #e7e4d4;
}
.dock-head.second {
    margin: 6px 0 3px;
}
.mini {
    width: 10px;
    height: 10px;
}
.dock-strip {
    height: 27px;
    background: linear-gradient(#fbfaf7, #ebe7d7);
}
.search {
    display: flex;
    align-items: center;
    gap: 5px;
    border-right: 1px solid #7f9db9;
    background: #ebe7d7;
}
.search input {
    width: 44px;
    height: 24px;
    border: 1px solid #7f9db9;
    border-left: 0;
    background: #fff;
}
.search button {
    display: flex;
    padding: 2px 0;
    border: 1px solid #e0e6ec;
    background: #f5f8fa;
}
.tree {
    flex: 1;
    border: 1px solid #7f9db9;
    border-left: 0;
    background: #fff;
}
.props {
    flex: none;
    display: flex;
    height: 102px;
    margin-bottom: 4px;
    padding: 1px 1px 1px 0;
    border: 1px solid #7f9db9;
    border-left: 0;
    background: #fff;
}
.prop-rows {
    width: 49px;
    border-right: 1px solid #aaa;
}
.prop-rows div {
    height: 19px;
    border-bottom: 1px solid #c0c0c0;
}
.prop-rows .head {
    height: 22px;
    background: linear-gradient(#f8d28f, #eebb5c);
}
.prop-rows .sel {
    background: #dce7f4;
}
.scroll {
    display: flex;
    flex-direction: column;
    gap: 2px;
    margin-left: 2px;
    background: #f5f5fb;
}
.scroll button {
    display: flex;
    width: 15px;
    height: 15px;
    padding: 2px;
    border: 1px solid #b4c8f0;
    border-radius: 2px;
    background: #c5d5fb;
}
.scroll .bottom {
    margin-top: auto;
}
.thumb {
    height: 7px;
    border: 1px solid #9fb5e8;
    border-radius: 2px;
    background: #c5d5fb;
}
.preview {
    flex: none;
    height: 308px;
    margin-right: 1px;
    background: #000;
}

/* right side */
.main {
    flex: 1;
    min-width: 0;
    display: flex;
    flex-direction: column;
}
.rows {
    flex: none;
    padding: 2px 0 0 5px;
}
.pair {
    display: flex;
    gap: 50px;
}
.pair .strip {
    height: 25px;
}
.pair .empty {
    width: 32px;
    height: 20px;
}
.viewport {
    flex: 1;
    min-height: 0;
    position: relative;
    margin-left: 3px;
    overflow: hidden;
    background: #000;
}
.scene {
    display: block;
    width: 100%;
    height: 100%;
}
.dims text {
    fill: #f4f4f4;
    font-family: "Noto Sans CJK SC", sans-serif;
    font-size: 25px;
}
.dims .formula {
    fill: #0a820a;
    font-size: 26px;
}
.dims .big {
    font-size: 28px;
}
.float {
    position: absolute;
    left: 2px;
    top: 2px;
    width: 174px;
    height: 173px;
    display: flex;
    flex-direction: column;
    padding: 4px;
    border: 1px solid #5560c8;
    background: linear-gradient(#6f8ce6, #7f94ea 20px, #7484de);
}
.float h2 {
    margin: 0 0 3px;
    color: #dbe5ff;
    font-size: 13px;
    line-height: 15px;
}
.float-body {
    flex: 1;
    padding: 2px 4px;
    border: 1px solid #5a6a90;
    background: #fff;
}
.float label {
    display: flex;
    align-items: center;
    gap: 3px;
    line-height: 12px;
}
.float input {
    width: 11px;
    height: 11px;
    appearance: none;
    border: 1px solid #a0a890;
    background: #e6f6e2 url("data:image/svg+xml,%3Csvg xmlns='http://www.w3.org/2000/svg' width='9' height='9'%3E%3Cpath d='M1 4l2 3 5-5' fill='none' stroke='%23218321' stroke-width='2'/%3E%3C/svg%3E") no-repeat center;
}

/* snap bar */
.snapbar {
    flex: none;
    padding: 0 0 4px 5px;
}
.snapbar .strip {
    height: 27px;
    padding-right: 9px;
}
.spin {
    display: flex;
    align-items: center;
    margin-right: 6px;
    color: #aca899;
    font-size: 10px;
}
.spin input {
    width: 58px;
    height: 19px;
    margin: 0 0 0 2px;
    padding: 0 16px 0 2px;
    border: 1px solid #b9b6a8;
    font-size: 11px;
    text-align: right;
    background: #f4f2ea url("data:image/svg+xml,%3Csvg xmlns='http://www.w3.org/2000/svg' width='5' height='13'%3E%3Cpath d='M0 3h5L2.500 0zM0 10h5L2.500 13z' fill='%23999'/%3E%3C/svg%3E") no-repeat right 4px center;
}
.spin + .sep {
    margin-left: -4px;
}
.spin.wide {
    margin-right: 0;
}
.spin.wide input {
    width: 68px;
}
.turn {
    display: flex;
    align-items: center;
    gap: 8px;
}
.turn input {
    width: 11px;
    height: 11px;
    margin-left: 2px;
    appearance: none;
    border: 1px solid #a5a294;
}

/* rebar editor */
.editor {
    flex: none;
    display: flex;
}
.dock-side {
    flex: none;
    width: 16px;
    display: flex;
    justify-content: center;
    align-items: flex-start;
    padding-left: 2px;
    background: repeating-linear-gradient(#9d9a8b 0 2px, transparent 2px 4px) 8px 14px / 2px 100% no-repeat;
}
.dock-side button {
    width: 8px;
    height: 8px;
    display: flex;
    margin-top: 1px;
    padding: 0;
    border: 0;
    border-radius: 2px;
    background: #c8302a;
}
.editor-body {
    flex: 1;
    min-width: 0;
    overflow: hidden;
    padding-bottom: 11px;
    border-left: 1px solid #7f9db9;
    background: #fff;
}
.editor-tools {
    width: auto;
    height: 25px;
}
.nav {
    display: flex;
    flex: none;
    padding: 0;
    margin: 0 4px 0 3px;
    border: 0;
    background: none;
}
.total {
    padding-left: 4px;
}
.bars {
    width: calc(100% + 38px);
    table-layout: fixed;
    border-collapse: separate;
    border-spacing: 0;
    border-top: 1px solid #6a9cc4;
    font-size: 11px;
}
.c-no { width: 33px; }
.c-name { width: 73px; }
.c-dia { width: 56px; }
.c-grade { width: 36px; }
.c-fig { width: 33px; }
.c-calc { width: 166px; }
.c-desc { width: 156px; }
.c-len { width: 61px; }
.c-qty { width: 38px; }
.c-lap { width: 39px; }
.c-loss { width: 49px; }
.c-total { width: 54px; }
.bars th, .bars td {
    height: 34px;
    padding: 0 0 0 2px;
    border-right: 1px solid #b8b8b0;
    border-bottom: 1px solid #b8b8b0;
    overflow: hidden;
    white-space: nowrap;
    font-weight: normal;
    text-align: left;
}
.bars th {
    padding: 0;
    text-align: center;
    background: linear-gradient(90deg, #fff, #ece9dc);
}
.bars thead th {
    height: 20px;
    color: #5a0040;
    font-size: 12px;
    background: linear-gradient(#f9d597, #f0bd62);
}
.bars thead th:first-child {
    background: #f8f8f6;
}
.bars td {
    background: #ccffd9;
}
.bars .name {
    border-right-color: #000;
    font-size: 12px;
}
.bars .desc {
    font-size: 12px;
}
.bars .mid {
    text-align: center;
    padding: 0;
}
.bars .current td {
    background: #9ed0d2;
}
.bars .current .name {
    background: #b2e2d2;
}
.bars .current th {
    color: #5a0040;
    font-weight: bold;
    background: #ffd08a;
}
.bars .blank th, .bars .blank td {
    height: 19px;
}
.bars .blank td {
    background: #fff;
}
.grade {
    width: 11px;
    height: 11px;
    vertical-align: middle;
}
.bent {
    display: block;
    width: 140px;
    height: 32px;
    margin: 0 auto;
    overflow: visible;
}
.bent .end {
    text-anchor: end;
}
.bent .center {
    text-anchor: middle;
}
.marks {
    position: absolute;
    left: 0;
    top: 0;
    width: 100%;
    height: 100%;
    pointer-events: none;
}
```
